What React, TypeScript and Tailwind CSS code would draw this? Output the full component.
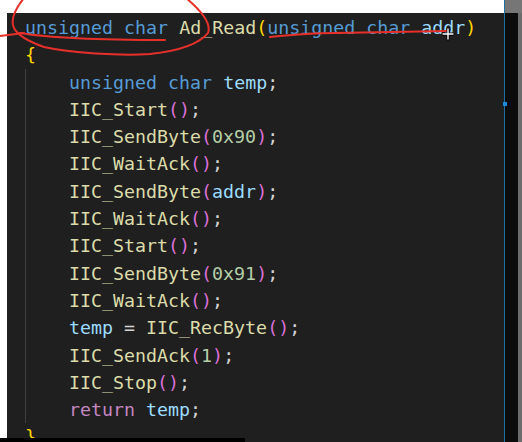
import React from "react";

type Tok = [string, string];

const KW = "text-[#569cd6]";
const FN = "text-[#dcdcaa]";
const VAR = "text-[#9cdcfe]";
const NUM = "text-[#b5cea8]";
const CTRL = "text-[#c586c0]";
const GOLD = "text-[#ffd700]";
const PINK = "text-[#da70d6]";
const TXT = "text-[#d4d4d4]";

const call = (name: string, arg?: Tok): Tok[] => [
  [FN, name],
  [PINK, "("],
  ...(arg ? [arg] : []),
  [PINK, ")"],
  [TXT, ";"],
];

const header: Tok[] = [
  [KW, "unsigned"],
  [TXT, " "],
  [KW, "char"],
  [TXT, " "],
  [FN, "Ad_Read"],
  [GOLD, "("],
  [KW, "unsigned"],
  [TXT, " "],
  [KW, "char"],
  [TXT, " "],
  [VAR, "addr"],
  [GOLD, ")"],
];

const body: Tok[][] = [
  [[KW, "unsigned"], [TXT, " "], [KW, "char"], [TXT, " "], [VAR, "temp"], [TXT, ";"]],
  call("IIC_Start"),
  call("IIC_SendByte", [NUM, "0x90"]),
  call("IIC_WaitAck"),
  call("IIC_SendByte", [VAR, "addr"]),
  call("IIC_WaitAck"),
  call("IIC_Start"),
  call("IIC_SendByte", [NUM, "0x91"]),
  call("IIC_WaitAck"),
  [[VAR, "temp"], [TXT, " = "], ...call("IIC_RecByte")],
  call("IIC_SendAck", [NUM, "1"]),
  call("IIC_Stop"),
  [[CTRL, "return"], [TXT, " "], [VAR, "temp"], [TXT, ";"]],
];

function Line({ toks }: { toks: Tok[] }) {
  return (
    <div className="h-[27.3px] leading-[27.3px] whitespace-pre">
      {toks.map(([c, t], i) => (
        <span key={i} className={c}>
          {t}
        </span>
      ))}
    </div>
  );
}

export default function App() {
  return (
    <div className="relative w-[522px] h-[442px] bg-white flex flex-col overflow-hidden">
      {/* top strip */}
      <div className="h-[13px] flex shrink-0">
        <div className="w-[504px] bg-white" />
        <div className="w-[1px] bg-[#1c6ea4]" />
        <div className="flex-1 bg-[#767676]" />
      </div>

      <div className="flex-1 flex">
        <div className="w-[7px] bg-white" />
        {/* editor */}
        <div className="w-[497px] bg-[#1f1f1f] overflow-hidden pt-[1px] pl-[18px] font-['DejaVu_Sans_Mono',monospace] text-[18.3px]">
          <Line toks={header} />
          <Line toks={[[GOLD, "{"]]} />
          <div className="border-l border-[#404040] pl-[43px]">
            {body.map((t, i) => (
              <Line key={i} toks={t} />
            ))}
          </div>
          <Line toks={[[GOLD, "}"]]} />
        </div>
        {/* minimap edge / cursor line */}
        <div className="relative w-[1px] bg-[#1c6ea4]">
          <div className="absolute top-[89px] -left-[1px] w-[4px] h-[4px] bg-[#1f8ad6]" />
        </div>
        <div className="w-[13px] bg-[#0c0c0c]" />
        <div className="w-[4px] bg-[#6c6c6c]" />
      </div>

      {/* bottom bar */}
      <div className="absolute left-0 bottom-0 w-[245px] h-[4px] bg-black" />

      {/* hand-drawn annotations */}
      <svg
        className="absolute inset-0 pointer-events-none"
        width="522"
        height="442"
        viewBox="0 0 522 442"
        fill="none"
      >
        <g stroke="#e8302a" strokeWidth="2" strokeLinecap="round">
          <path d="M24 -2 C16 8, 10 20, 14 28 C18 36, 30 42, 44 47 C70 53, 120 56, 150 54 C180 51, 200 43, 208 33 C212 22, 198 8, 186 -2" />
          <path d="M20 33 C50 38, 100 40, 165 40" />
          <path d="M0 36 L24 33" />
          <path d="M270 37 C290 35, 310 33, 335 33 L448 31" />
        </g>
        <g transform="translate(448 34)" strokeLinecap="round">
          <path d="M-5 0 H5 M0 -5 V5" stroke="#000" strokeWidth="3" />
          <path d="M-5 0 H5 M0 -5 V5" stroke="#fff" strokeWidth="1.4" />
        </g>
      </svg>
    </div>
  );
}
